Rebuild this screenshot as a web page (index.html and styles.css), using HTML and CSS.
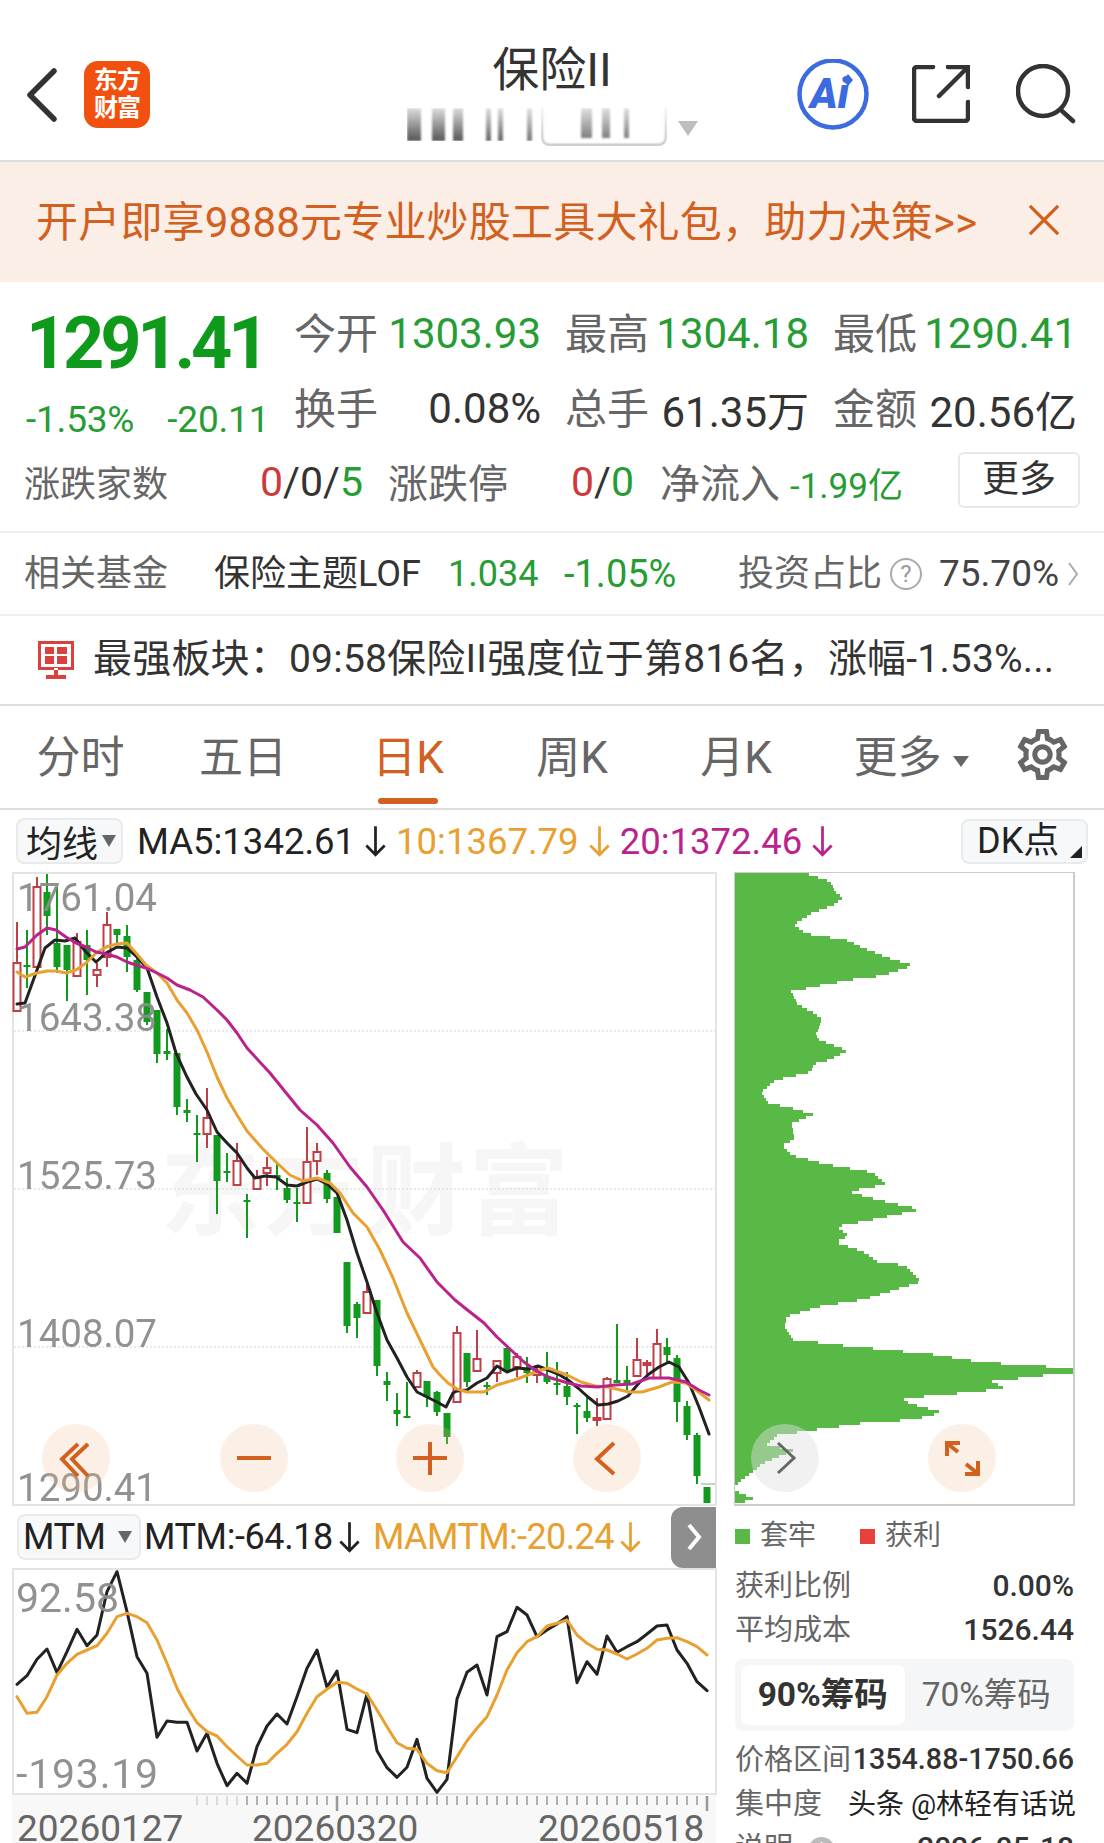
FILE: index.html
```html
<!DOCTYPE html>
<html lang="zh-CN">
<head>
    <meta charset="UTF-8">
    <meta name="viewport" content="width=device-width, initial-scale=1.0">
    <title>保险II</title>
    <link rel="stylesheet" href="styles.css">
</head>
<body>
<div class="page">
    <header class="header">
        <div class="header-left">
            <svg class="back" viewBox="0 0 32 54"><path d="M28 3 L4 27 L28 51"/></svg>
            <div class="logo"><span>东方</span><span>财富</span></div>
        </div>
        <div class="header-title">
            <div class="title">保险II</div>
            <div class="subtitle">
                <div class="blur-a"></div>
                <div class="blur-b"></div>
                <div class="tri-down"></div>
            </div>
        </div>
        <div class="header-right">
            <svg class="icon-ai" viewBox="797 59 72 72">
                <circle cx="833" cy="94" r="33.5"/>
                <text x="810" y="108" class="ai-text">Ai</text>
                <path d="M848 74 l5 6 l-5 6 l-5 -6 z"/>
            </svg>
            <svg class="icon-share" viewBox="912 65 58 58">
                <path d="M933 67 H917 a3 3 0 0 0 -3 3 V118 a3 3 0 0 0 3 3 H965 a3 3 0 0 0 3 -3 V102"/>
                <path d="M948 67 H968 V87"/>
                <path d="M968 67 L939 96"/>
            </svg>
            <svg class="icon-search" viewBox="1016 64 60 60">
                <circle cx="1043" cy="91" r="25"/>
                <path d="M1062 111 L1073 121"/>
            </svg>
        </div>
    </header>

    <div class="banner">
        <div class="banner-text">开户即享9888元专业炒股工具大礼包，助力决策&gt;&gt;</div>
        <svg class="banner-close" viewBox="0 0 34 34"><path d="M2 2 L32 32 M32 2 L2 32"/></svg>
    </div>

    <section class="quote">
        <div class="quote-top">
            <div class="price-box">
                <div class="price">1291.41</div>
                <div class="change"><span>-1.53%</span><span>-20.11</span></div>
            </div>
            <div class="stats">
                <div class="stat"><span class="label">今开</span><span class="green">1303.93</span></div>
                <div class="stat"><span class="label">最高</span><span class="green">1304.18</span></div>
                <div class="stat"><span class="label">最低</span><span class="green">1290.41</span></div>
                <div class="stat"><span class="label">换手</span><span class="dark">0.08%</span></div>
                <div class="stat"><span class="label">总手</span><span class="dark">61.35万</span></div>
                <div class="stat"><span class="label">金额</span><span class="dark">20.56亿</span></div>
            </div>
        </div>
        <div class="breadth">
            <span class="label">涨跌家数</span>
            <span class="dark"><span class="red">0</span>/0/<span class="green">5</span></span>
            <span class="label">涨跌停</span>
            <span class="dark"><span class="red">0</span>/<span class="green">0</span></span>
            <span class="label">净流入</span>
            <span class="green flow">-1.99亿</span>
            <button class="more-btn">更多</button>
        </div>
    </section>

    <div class="fund">
        <span class="label">相关基金</span>
        <span class="dark">保险主题LOF</span>
        <span class="green">1.034</span>
        <span class="green pct">-1.05%</span>
        <span class="label">投资占比</span>
        <span class="help">?</span>
        <span class="dark-soft share">75.70%</span>
        <svg class="fund-arrow" viewBox="0 0 12 26"><path d="M2 2 L10 13 L2 24"/></svg>
    </div>

    <div class="strong">
        <svg class="strong-icon" viewBox="0 0 38 38">
            <path class="solid" d="M1 0 H37 V29 H1 Z M4 3 V26 H34 V3 Z M17 27 H21 V34 H17 Z M9 34 H29 V38 H9 Z"/>
            <path class="solid" d="M8 6 H17 V13 H8 Z M20 6 H30 V13 H20 Z M8 15 H17 V23 H8 Z M20 15 H30 V23 H20 Z"/>
        </svg>
        <div class="strong-text">最强板块：09:58保险II强度位于第816名，涨幅-1.53%...</div>
    </div>

    <nav class="tabs">
        <div class="tab">分时</div>
        <div class="tab">五日</div>
        <div class="tab active">日K</div>
        <div class="tab">周K</div>
        <div class="tab">月K</div>
        <div class="tab">更多<i class="tab-caret"></i></div>
        <svg class="gear" viewBox="2 2 20 20"><path d="M19.43 12.98c.04-.32.07-.64.07-.98 0-.34-.03-.66-.07-.98l2.11-1.65c.19-.15.24-.42.12-.64l-2-3.46c-.09-.16-.26-.25-.44-.25-.06 0-.12.01-.17.03l-2.49 1c-.52-.4-1.08-.73-1.69-.98l-.38-2.65C14.46 2.18 14.25 2 14 2h-4c-.25 0-.46.18-.49.42l-.38 2.65c-.61.25-1.17.59-1.69.98l-2.49-1c-.06-.02-.12-.03-.18-.03-.17 0-.34.09-.43.25l-2 3.46c-.13.22-.07.49.12.64l2.11 1.65c-.04.32-.07.65-.07.98 0 .33.03.66.07.98l-2.11 1.65c-.19.15-.24.42-.12.64l2 3.46c.09.16.26.25.44.25.06 0 .12-.01.17-.03l2.49-1c.52.4 1.08.73 1.69.98l.38 2.65c.03.24.24.42.49.42h4c.25 0 .46-.18.49-.42l.38-2.65c.61-.25 1.17-.59 1.69-.98l2.49 1c.06.02.12.03.18.03.17 0 .34-.09.43-.25l2-3.46c.12-.22.07-.49-.12-.64l-2.11-1.65zM17.45 11.27c.04.31.05.52.05.73 0 .21-.02.43-.05.73l-.14 1.13.89.7 1.08.84-.7 1.21-1.27-.51-1.04-.42-.9.68c-.43.32-.84.56-1.25.73l-1.06.43-.16 1.13-.2 1.35h-1.4l-.19-1.35-.16-1.13-1.06-.43c-.43-.18-.83-.41-1.23-.71l-.91-.7-1.06.43-1.27.51-.7-1.21 1.08-.84.89-.7-.14-1.13c-.03-.31-.05-.54-.05-.74s.02-.43.05-.73l.14-1.13-.89-.7-1.08-.84.7-1.21 1.27.51 1.04.42.9-.68c.43-.32.84-.56 1.25-.73l1.06-.43.16-1.13.2-1.35h1.39l.19 1.35.16 1.13 1.06.43c.43.18.83.41 1.23.71l.91.7 1.06-.43 1.27-.51.7 1.21-1.07.85-.89.7.14 1.13zM12 8c-2.21 0-4 1.79-4 4s1.79 4 4 4 4-1.79 4-4-1.79-4-4-4zm0 6c-1.1 0-2-.9-2-2s.9-2 2-2 2 .9 2 2-.9 2-2 2z"/></svg>
    </nav>

    <div class="ma-row">
        <div class="picker ma-picker">均线<i class="caret"></i></div>
        <div class="ma-values">
            <span class="c-black">MA5:1342.61</span>
            <svg class="down" viewBox="0 0 20 28"><path class="c-black" d="M10 1 V26 M2 18 L10 26 L18 18"/></svg>
            <span class="c-orange">10:1367.79</span>
            <svg class="down" viewBox="0 0 20 28"><path class="c-orange" d="M10 1 V26 M2 18 L10 26 L18 18"/></svg>
            <span class="c-pink">20:1372.46</span>
            <svg class="down" viewBox="0 0 20 28"><path class="c-pink" d="M10 1 V26 M2 18 L10 26 L18 18"/></svg>
        </div>
        <div class="dk">DK点<i class="dk-corner"></i></div>
    </div>

    <div class="charts">
        <div class="charts-left">
            <svg class="main-chart" viewBox="14 874 701 630">
                <text x="160" y="1227" class="watermark">东方财富</text>
                <path class="gridline" d="M14 1031 H715 M14 1189 H715 M14 1347 H715"/>
                <g id="mainCandles"></g>
                <g id="mainLines"></g>
                <path class="last-tick" d="M701 1484 H715"/>
                <text x="17" y="911" class="axis-num">1761.04</text>
                <text x="17" y="1031" class="axis-num">1643.38</text>
                <text x="17" y="1189" class="axis-num">1525.73</text>
                <text x="17" y="1347" class="axis-num">1408.07</text>
                <text x="17" y="1501" class="axis-num">1290.41</text>
                <circle class="round-btn" cx="76" cy="1458" r="34"/>
                <path class="round-icon" d="M78 1444 L62 1459 L78 1476 M88 1444 L72 1459 L88 1476"/>
                <circle class="round-btn" cx="254" cy="1458" r="34"/>
                <path class="round-icon" d="M237 1458 H271"/>
                <circle class="round-btn" cx="430" cy="1458" r="34"/>
                <path class="round-icon" d="M413 1458 H447 M430 1442 V1475"/>
                <circle class="round-btn" cx="607" cy="1458" r="34"/>
                <path class="round-icon" d="M614 1443 L597 1459 L614 1474"/>
            </svg>

            <div class="mtm-row">
                <div class="picker mtm-picker">MTM<i class="caret"></i></div>
                <span class="c-black">MTM:-64.18</span>
                <svg class="down" viewBox="0 0 20 28"><path class="c-black" d="M10 1 V26 M2 18 L10 26 L18 18"/></svg>
                <span class="c-orange mamtm">MAMTM:-20.24</span>
                <svg class="down" viewBox="0 0 20 28"><path class="c-orange" d="M10 1 V26 M2 18 L10 26 L18 18"/></svg>
                <div class="mtm-next"><svg viewBox="0 0 16 30"><path d="M3 3 L13 15 L3 27"/></svg></div>
            </div>

            <svg class="sub-chart" viewBox="14 1570 701 223">
                <g id="subLines"></g>
                <text x="16" y="1612" class="axis-num sub-num">92.58</text>
                <text x="16" y="1788" class="axis-num sub-num low-num">-193.19</text>
            </svg>

            <div class="time-axis">
                <svg class="ticks" viewBox="14 1795 701 18" id="ticks"></svg>
                <div class="dates"><span>20260127</span><span>20260320</span><span>20260518</span></div>
            </div>
        </div>

        <div class="charts-right">
            <svg class="chip-chart" viewBox="735 873 338 631">
                <path id="chipShape" class="chip-fill" d=""/>
                <circle class="round-gray" cx="785" cy="1458" r="34"/>
                <path class="gray-icon" d="M778 1443 L794 1458 L778 1473"/>
                <circle class="round-btn" cx="962" cy="1458" r="34"/>
                <path class="round-icon" d="M947 1456 V1443 H960 M948 1444 L958 1452 M978 1474 V1461 M965 1474 H978 V1472 M977 1473 L966 1464"/>
            </svg>
            <div class="legend">
                <i class="sq sq-green"></i><span>套牢</span>
                <i class="sq sq-red"></i><span>获利</span>
            </div>
            <div class="kv"><span>获利比例</span><b>0.00%</b></div>
            <div class="kv"><span>平均成本</span><b>1526.44</b></div>
            <div class="segment">
                <div class="seg on">90%筹码</div>
                <div class="seg">70%筹码</div>
            </div>
            <div class="kv kv-range"><span>价格区间</span><b>1354.88-1750.66</b></div>
            <div class="kv"><span>集中度</span></div>
            <div class="kv"><span>说明<i class="info">i</i></span><b>2026-05-18</b></div>
        </div>
        <div class="credit">头条 @林轻有话说</div>
    </div>
</div>
<script src="chart.js"></script>
</body>
</html>
```

FILE: styles.css
```css
* {
    box-sizing: border-box;
}
body {
    margin: 0;
    background-color: #fff;
    font-family: Roboto, "Noto Sans CJK SC", sans-serif;
    color: #333;
}
.page {
    width: 1104px;
    height: 1843px;
    overflow: hidden;
    position: relative;
}
.green { color: #279c35; }
.red { color: #cc3a3c; }
.dark { color: #333; }
.dark-soft { color: #444; }
.label { color: #666; margin-bottom: 6px; }

/* header */
.header {
    height: 162px;
    border-bottom: 2px solid #ddd;
    display: grid;
    grid-template-columns: 1fr auto 1fr;
}
.header-left {
    display: flex;
    align-items: flex-start;
    padding: 61px 0 0 26px;
}
.back {
    width: 32px;
    height: 54px;
    margin-top: 7px;
    fill: none;
    stroke: #333;
    stroke-width: 5.5;
    stroke-linecap: round;
    stroke-linejoin: round;
}
.logo {
    width: 66px;
    height: 67px;
    margin-left: 26px;
    background-color: #f2500f;
    border-radius: 14px;
    color: #fff;
    font-size: 24px;
    font-weight: 700;
    line-height: 28px;
    text-align: center;
    padding-top: 5px;
    letter-spacing: -1px;
}
.logo span {
    display: block;
}
.header-title {
    padding-top: 42px;
    display: flex;
    flex-direction: column;
    align-items: center;
}
.title {
    font-size: 47px;
    line-height: 56px;
    color: #333;
}
.subtitle {
    display: flex;
    align-items: flex-start;
    margin-top: 10px;
    height: 38px;
}
.blur-a,
.blur-b {
    height: 33px;
    filter: blur(1px);
    -webkit-mask-image: linear-gradient(to bottom, rgba(0,0,0,.2), #000);
    mask-image: linear-gradient(to bottom, rgba(0,0,0,.2), #000);
}
.blur-a {
    width: 134px;
    background: linear-gradient(to right, #555 0 14px, transparent 14px 25px, #555 25px 38px, transparent 38px 46px, #555 46px 56px, transparent 56px 79px, #666 79px 84px, transparent 84px 91px, #666 91px 96px, transparent 96px 120px, #777 120px 125px, transparent 125px);
}
.blur-b {
    width: 126px;
    height: 38px;
    border: 2px solid #aaa;
    border-top: 0;
    border-radius: 0 0 8px 8px;
    background: linear-gradient(to right, transparent 0 38px, #666 38px 49px, transparent 49px 59px, #666 59px 67px, transparent 67px 81px, #666 81px 86px, transparent 86px);
    background-size: 100% 30px;
    background-repeat: no-repeat;
}
.tri-down {
    width: 0;
    height: 0;
    margin: 13px 0 0 11px;
    border-left: 10px solid transparent;
    border-right: 10px solid transparent;
    border-top: 15px solid #bdbdbd;
}
.header-right {
    display: flex;
    justify-content: flex-end;
    align-items: flex-start;
    padding-right: 28px;
}
.icon-ai {
    width: 72px;
    height: 72px;
    margin-top: 59px;
    fill: #3c6be0;
}
.icon-ai circle {
    fill: none;
    stroke: #3c6be0;
    stroke-width: 4.5;
}
.ai-text {
    font-size: 42px;
    font-weight: 900;
    font-style: italic;
}
.icon-share {
    width: 58px;
    height: 58px;
    margin: 65px 0 0 43px;
    fill: none;
    stroke: #333;
    stroke-width: 4.5;
    stroke-linecap: round;
}
.icon-search {
    width: 60px;
    height: 60px;
    margin: 64px 0 0 46px;
    fill: none;
    stroke: #333;
    stroke-width: 4.5;
    stroke-linecap: round;
}

/* banner */
.banner {
    height: 120px;
    background-color: #fbeee6;
    display: flex;
    align-items: center;
    padding: 0 44px 4px 36px;
    justify-content: space-between;
}
.banner-text {
    font-size: 42px;
    letter-spacing: .2px;
    color: #d2601e;
    white-space: nowrap;
    margin-bottom: 4px;
}
.banner-close {
    width: 32px;
    height: 32px;
    fill: none;
    stroke: #d2601e;
    stroke-width: 3.5;
}

/* quote */
.quote {
    height: 251px;
    border-bottom: 2px solid #eee;
    padding-top: 14px;
}
.quote-top {
    display: flex;
    height: 149px;
    padding-left: 26px;
}
.price-box {
    width: 268px;
}
.price {
    font-size: 72px;
    font-weight: 700;
    line-height: 74px;
    margin-top: 11px;
    letter-spacing: -4.2px;
    color: #0f9a1c;
}
.change {
    display: flex;
    gap: 33px;
    margin-top: 19px;
    font-size: 37px;
    line-height: 40px;
    letter-spacing: -.2px;
    color: #279c35;
    white-space: nowrap;
}
.stats {
    width: 784px;
    display: grid;
    grid-template-columns: 247px 244px 244px;
    column-gap: 24px;
    grid-auto-rows: 75px;
    font-size: 42px;
}
.stat {
    display: flex;
    justify-content: space-between;
    align-items: center;
    white-space: nowrap;
}
.breadth {
    display: grid;
    grid-template-columns: 236px 128px 183px 89px 130px 168px 122px;
    align-items: center;
    padding-left: 24px;
    height: 74px;
    font-size: 40px;
    white-space: nowrap;
}
.breadth .label {
    margin-bottom: 2px;
}
.breadth .label:first-child {
    font-size: 36px;
}
.breadth .dark {
    font-size: 41px;
}
.breadth .flow {
    font-size: 35px;
}
.more-btn {
    width: 122px;
    height: 56px;
    margin-bottom: 4px;
    background-color: #fff;
    border: 2px solid #e8e8e8;
    border-radius: 6px;
    font-family: inherit;
    font-size: 37px;
    color: #333;
    padding: 0;
    line-height: 48px;
}

/* fund and strongest rows */
.fund {
    height: 83px;
    border-bottom: 2px solid #eee;
    display: grid;
    grid-template-columns: 190px 234px 116px 174px 152px 49px 128px 14px;
    align-items: center;
    padding-left: 24px;
    font-size: 36px;
    white-space: nowrap;
}
.fund .label,
.fund > .dark {
    margin-bottom: 8px;
}
.fund .pct {
    font-size: 38px;
}
.fund .share {
    font-size: 37px;
}
.help {
    width: 32px;
    height: 32px;
    border: 2px solid #aaa;
    border-radius: 50%;
    color: #999;
    font-size: 24px;
    line-height: 28px;
    text-align: center;
}
.fund-arrow {
    width: 12px;
    height: 26px;
    fill: none;
    stroke: #aaa;
    stroke-width: 2;
}
.strong {
    height: 90px;
    border-bottom: 2px solid #ddd;
    display: flex;
    align-items: center;
    padding-left: 37px;
}
.strong-icon {
    width: 38px;
    height: 38px;
    fill: #d9413f;
    fill-rule: evenodd;
}
.strong-text {
    margin: 0 0 10px 18px;
    font-size: 39px;
    letter-spacing: .2px;
    color: #333;
    white-space: nowrap;
}

/* tabs */
.tabs {
    height: 104px;
    border-bottom: 2px solid #ddd;
    display: grid;
    grid-template-columns: 161px 164px 166px 162px 166px 184px auto;
    align-items: center;
    padding-bottom: 6px;
    font-size: 44px;
    color: #666;
}
.tab {
    position: relative;
    text-align: center;
    white-space: nowrap;
}
.tab.active {
    color: #d2601e;
}
.tab.active::after {
    content: "";
    position: absolute;
    left: 53px;
    bottom: -18px;
    width: 60px;
    height: 6px;
    border-radius: 3px;
    background-color: #d2601e;
}
.tab-caret {
    display: inline-block;
    margin-left: 11px;
    vertical-align: middle;
    border-left: 8px solid transparent;
    border-right: 8px solid transparent;
    border-top: 11px solid #666;
}
.gear {
    width: 51px;
    height: 51px;
    margin-left: 14px;
    fill: #666;
}

/* indicator rows */
.ma-row {
    height: 62px;
    display: flex;
    align-items: center;
    padding: 0 16px;
    font-size: 36.5px;
    white-space: nowrap;
}
.picker {
    display: flex;
    align-items: center;
    height: 46px;
    background-color: #f7f8fa;
    border: 2px solid #e9eaec;
    border-radius: 8px;
    color: #222;
    font-size: 36px;
}
.ma-picker {
    width: 107px;
    padding-left: 8px;
}
.caret {
    display: inline-block;
    margin-left: 4px;
    border-left: 7px solid transparent;
    border-right: 7px solid transparent;
    border-top: 12px solid #666;
}
.ma-values {
    display: flex;
    align-items: center;
    gap: 9px;
    margin-left: 14px;
}
.c-black { color: #222; stroke: #222; }
.c-orange { color: #e8a030; stroke: #e8a030; }
.c-pink { color: #b9238b; stroke: #b9238b; }
.down {
    width: 23px;
    height: 32px;
    fill: none;
    stroke-width: 2.4;
}
.dk {
    position: relative;
    width: 127px;
    height: 45px;
    margin-left: auto;
    background-color: #f7f8fa;
    border: 2px solid #e9eaec;
    border-radius: 8px;
    padding-left: 14px;
    font-size: 36px;
    line-height: 40px;
    color: #222;
}
.dk-corner {
    position: absolute;
    right: 4px;
    bottom: 4px;
    width: 0;
    height: 0;
    border-left: 12px solid transparent;
    border-bottom: 12px solid #222;
}

/* charts */
.charts {
    position: relative;
    display: flex;
    padding-left: 13px;
}
.charts-left {
    width: 703px;
    flex-shrink: 0;
}
.main-chart {
    display: block;
    width: 701px;
    height: 630px;
    border: 2px solid #e4e4e4;
    box-sizing: content-box;
    margin-left: -1px;
    overflow: visible;
}
.watermark {
    font-size: 100px;
    font-weight: 700;
    letter-spacing: 3px;
    fill: #f6f6f6;
}
.gridline {
    fill: none;
    stroke: #e2e2e2;
    stroke-width: 1.5;
    stroke-dasharray: 2 2;
}
.last-tick {
    stroke: #ccc;
    stroke-width: 2;
}
.axis-num {
    font-size: 38.5px;
    fill: #8c8c8c;
    opacity: .95;
}
.sub-num {
    font-size: 41px;
}
.low-num {
    letter-spacing: .8px;
}
.round-btn {
    fill: rgba(243, 190, 150, .24);
}
.round-gray {
    fill: rgba(225, 225, 225, .45);
}
.round-icon {
    fill: none;
    stroke: #d2601e;
    stroke-width: 4;
}
.gray-icon {
    fill: none;
    stroke: #666;
    stroke-width: 3;
}
.mtm-row {
    display: flex;
    align-items: center;
    height: 62px;
    font-size: 36px;
    letter-spacing: -.4px;
    white-space: nowrap;
}
.mtm-picker {
    width: 124px;
    margin: 0 3px 0 4px;
    padding-left: 4px;
}
.mtm-picker .caret {
    margin-left: 12px;
}
.mtm-row .down {
    margin-left: 5px;
}
.mamtm {
    margin-left: 12px;
    letter-spacing: -.6px;
}
.mtm-next {
    margin-left: auto;
    width: 45px;
    height: 61px;
    background-color: #8e8e8e;
    border-radius: 12px 0 0 12px;
    display: flex;
    align-items: center;
    justify-content: center;
}
.mtm-next svg {
    width: 16px;
    height: 30px;
    fill: none;
    stroke: #fff;
    stroke-width: 4;
}
.sub-chart {
    display: block;
    width: 701px;
    height: 223px;
    border: 2px solid #e4e4e4;
    box-sizing: content-box;
    margin-left: -1px;
    overflow: visible;
}
.time-axis {
    height: 60px;
    background-color: #f8f8f8;
    margin-left: -1px;
}
.ticks {
    display: block;
    width: 701px;
    height: 18px;
    margin-left: 2px;
    stroke: #999;
}
.dates {
    display: grid;
    grid-template-columns: 235px 286px auto;
    padding-left: 5px;
    margin-top: -5px;
    font-size: 37px;
    line-height: 42px;
    color: #666;
}
.charts-right {
    width: 339px;
    margin-left: 19px;
    font-size: 29px;
    color: #666;
}
.chip-chart {
    display: block;
    width: 338px;
    height: 631px;
    border: solid #ccc;
    border-width: 1px 2px 2px 1px;
    box-sizing: content-box;
    margin-left: -1px;
    background-color: #fff;
}
.chip-fill {
    fill: #58b947;
}
.legend {
    display: flex;
    align-items: center;
    height: 55px;
    padding-top: 5px;
    font-size: 28px;
}
.legend span {
    margin-bottom: 6px;
}
.sq {
    width: 15px;
    height: 15px;
    margin-right: 10px;
}
.sq-green { background-color: #58b947; }
.sq-red { background-color: #e8413c; margin-left: 44px; }
.kv {
    display: flex;
    justify-content: space-between;
    align-items: center;
    height: 44px;
    white-space: nowrap;
}
.kv b {
    font-size: 30px;
    font-weight: 500;
    color: #333;
    margin-top: 4px;
}
.segment {
    display: flex;
    height: 72px;
    margin: 10px 0 4px;
    padding: 6px;
    background-color: #f5f6f8;
    border-radius: 8px;
    font-size: 33.5px;
    line-height: 60px;
    text-align: center;
}
.seg {
    flex: 1;
}
.seg.on {
    background-color: #fff;
    border-radius: 8px;
    color: #333;
    font-weight: 700;
}
.kv-range b {
    font-size: 28.7px;
    letter-spacing: 0;
}
.info {
    display: inline-block;
    width: 27px;
    height: 27px;
    margin-left: 15px;
    border-radius: 50%;
    background-color: #bbb;
    color: #fff;
    font-size: 20px;
    line-height: 27px;
    text-align: center;
    vertical-align: middle;
    font-style: normal;
}
.credit {
    position: absolute;
    left: 848px;
    top: 915px;
    font-size: 28px;
    line-height: 36px;
    color: #222;
    white-space: nowrap;
    text-shadow: 1px 0 #fff, -1px 0 #fff, 0 1px #fff, 0 -1px #fff;
}
```

FILE: chart.js
```js
// candle rows: colour, wick top, body top, body bottom, wick bottom (y in page px)
const candles = [
    ['r',922,963,1011,1011],['g',930,965,967,988],['r',877,887,967,967],['g',874,892,916,935],
    ['g',887,943,967,973],['g',945,945,970,1001],['r',933,942,976,976],['g',930,945,960,995],
    ['r',963,970,975,987],['r',912,925,957,967],['g',929,929,935,945],['g',925,936,957,972],
    ['g',955,960,990,992],['g',992,992,1022,1025],['g',1010,1010,1054,1063],['g',1029,1051,1054,1060],
    ['g',1053,1053,1107,1115],['g',1099,1110,1113,1122],['g',1115,1133,1135,1162],['r',1088,1118,1134,1148],
    ['g',1135,1135,1181,1214],['g',1153,1171,1173,1182],['r',1143,1161,1185,1185],['g',1194,1200,1202,1238],
    ['r',1170,1178,1189,1189],['r',1157,1168,1173,1186],['g',1163,1175,1178,1190],['g',1178,1188,1200,1203],
    ['g',1188,1202,1204,1222],['r',1127,1162,1203,1203],['r',1143,1152,1161,1175],['g',1170,1173,1199,1203],
    ['g',1197,1197,1233,1233],['g',1262,1262,1326,1333],['g',1302,1304,1318,1338],['r',1282,1292,1313,1313],
    ['g',1300,1300,1366,1376],['g',1372,1381,1385,1401],['g',1393,1410,1414,1426],['g',1382,1416,1417,1417],
    ['r',1370,1373,1387,1387],['g',1381,1381,1397,1407],['g',1391,1392,1412,1416],['g',1413,1413,1437,1444],
    ['r',1326,1333,1402,1402],['g',1353,1353,1382,1387],['r',1330,1359,1371,1371],['g',1382,1385,1387,1395],
    ['r',1361,1361,1373,1382],['g',1345,1348,1372,1372],['r',1353,1357,1367,1377],['g',1357,1370,1373,1383],
    ['r',1367,1370,1375,1383],['g',1352,1376,1382,1384],['g',1362,1383,1385,1395],['g',1372,1386,1397,1405],
    ['g',1403,1405,1407,1434],['g',1395,1411,1418,1422],['r',1398,1418,1420,1426],['r',1377,1379,1419,1419],
    ['g',1324,1380,1383,1383],['g',1366,1380,1383,1393],['r',1338,1360,1376,1376],['r',1360,1363,1365,1376],
    ['r',1329,1344,1378,1378],['g',1338,1347,1355,1362],['g',1355,1358,1402,1422],['g',1401,1406,1435,1440],
    ['g',1433,1435,1476,1484],['g',1487,1487,1503,1503]
];

const ma5 = '17,1004 25,1003 37,970 45,948 55,940 65,941 75,938 86,952 96,962 106,953 117,947 127,948 138,958 147,968 157,997 167,1023 176,1053 187,1077 196,1094 207,1110 217,1132 227,1143 237,1153 247,1168 255,1178 265,1176 276,1177 287,1185 297,1186 307,1182 317,1179 327,1184 337,1193 347,1220 357,1253 367,1282 377,1313 387,1340 397,1358 407,1377 417,1392 427,1397 437,1402 446,1407 453,1393 457,1391 467,1390 477,1383 487,1378 497,1366 507,1372 517,1368 528,1369 538,1366 548,1370 558,1374 568,1380 578,1388 588,1397 598,1405 608,1404 618,1401 628,1396 639,1383 649,1374 659,1367 669,1362 679,1367 689,1383 699,1407 709,1434';
const ma10 = '17,972 25,977 37,973 47,971 56,971 66,973 76,970 86,963 96,953 106,947 117,944 127,943 136,953 146,965 157,973 167,983 177,1000 187,1013 197,1030 207,1052 217,1077 227,1098 237,1115 247,1131 262,1148 277,1163 290,1175 303,1181 317,1178 330,1183 340,1193 353,1213 367,1227 380,1250 393,1278 407,1313 420,1340 433,1367 440,1375 448,1383 457,1389 467,1392 484,1392 497,1385 514,1380 528,1375 541,1370 548,1368 567,1375 581,1382 595,1386 608,1387 629,1392 642,1392 659,1387 672,1382 686,1383 696,1390 709,1400';
const ma20 = '17,949 25,947 37,935 47,928 56,930 66,937 76,943 86,947 96,952 106,954 117,957 127,962 136,965 146,968 157,973 167,978 177,985 190,990 203,997 217,1010 227,1020 237,1033 247,1048 258,1060 270,1073 300,1110 317,1125 333,1143 350,1167 367,1187 383,1210 403,1242 420,1258 437,1282 455,1300 470,1312 484,1323 497,1337 511,1350 524,1362 538,1372 551,1378 568,1383 581,1386 598,1387 615,1385 632,1384 649,1378 669,1378 686,1382 699,1390 709,1395';

// momentum lines, one value a day, y as offset from 1500 at 3 units per px
const mtm = [553,527,478,447,518,455,388,437,405,275,215,335,470,520,712,663,667,667,753,700,790,857,820,850,740,678,642,672,590,505,450,562,513,688,698,582,752,803,832,802,718,835,877,838,597,517,495,585,410,395,322,345,410,390,372,350,548,485,523,408,457,440,425,402,378,375,450,490,545,572];
const mamtm = [590,640,637,590,525,490,463,450,437,400,350,340,350,368,420,490,565,620,668,695,708,740,768,795,795,790,760,733,695,640,590,568,547,550,567,582,630,680,728,745,748,790,812,818,770,722,685,650,585,510,458,425,410,378,370,360,405,430,448,450,462,477,462,445,420,415,413,425,440,465];

// right edge of the chip profile, x and y in page px
const chipEdge = [[809,873],[830,880],[835,890],[843,896],[833,904],[813,911],[794,923],[805,932],[830,936],[843,937],[867,948],[890,957],[913,964],[883,974],[853,978],[820,984],[791,990],[798,1003],[813,1011],[822,1018],[816,1033],[820,1039],[848,1049],[830,1058],[813,1063],[812,1070],[775,1079],[761,1091],[768,1101],[797,1108],[813,1113],[792,1122],[794,1138],[782,1144],[792,1154],[827,1163],[873,1171],[886,1183],[848,1190],[880,1199],[921,1208],[873,1218],[837,1225],[848,1234],[836,1241],[863,1250],[877,1260],[905,1264],[921,1280],[893,1289],[863,1298],[820,1305],[787,1315],[784,1325],[793,1338],[843,1344],[893,1349],[933,1353],[983,1361],[1037,1364],[1074,1368],[1074,1371],[1043,1374],[992,1380],[1005,1387],[957,1392],[902,1397],[910,1402],[943,1411],[913,1418],[860,1422],[810,1429],[777,1434],[767,1443],[793,1449],[763,1462],[735,1484],[735,1489],[755,1498],[735,1502]];

function candleMarkup() {
    return candles.map((c, i) => {
        const x = 17 + i * 10;
        const stroke = c[0] === 'r' ? '#bd3f47' : '#129a1e';
        let s = `<path d="M${x} ${c[1]} V${c[4]}" stroke="${stroke}" stroke-width="2" fill="none"/>`;
        if (c[0] === 'r') {
            s += `<rect x="${x - 3.5}" y="${c[2]}" width="7" height="${c[3] - c[2]}" fill="#fff" stroke="${stroke}" stroke-width="2"/>`;
        } else {
            s += `<rect x="${x - 3.5}" y="${c[2]}" width="7" height="${Math.max(c[3] - c[2], 2)}" fill="${stroke}"/>`;
        }
        return s;
    }).join('');
}

function lineMarkup(points, color) {
    return `<polyline points="${points}" fill="none" stroke="${color}" stroke-width="3" stroke-linejoin="round" stroke-linecap="round"/>`;
}

function subPoints(values) {
    return values.map((v, i) => `${17 + i * 10},${(1500 + v / 3).toFixed(1)}`).join(' ');
}

// the profile is drawn as bars 3px high, so its edge steps like the real one
function chipPath() {
    let d = 'M735 873';
    let seg = 0;
    for (let y = 873; y < 1503; y += 3) {
        while (seg < chipEdge.length - 2 && chipEdge[seg + 1][1] < y) seg++;
        const a = chipEdge[seg];
        const b = chipEdge[seg + 1];
        const t = Math.min(Math.max((y - a[1]) / (b[1] - a[1]), 0), 1);
        const x = Math.round(a[0] + (b[0] - a[0]) * t);
        d += ` H${x} V${y + 3}`;
    }
    return d + ' H735 Z';
}

function tickMarkup() {
    let s = '';
    for (let x = 197; x <= 707; x += 10) {
        const major = x === 337 || x === 707;
        const fade = x < 240 ? ' opacity=".4"' : '';
        s += `<path d="M${x} 1796 V${major ? 1811 : 1805}" stroke-width="${major ? 2.5 : 1.5}"${fade}/>`;
    }
    return s;
}

document.getElementById('mainCandles').innerHTML = candleMarkup();
document.getElementById('mainLines').innerHTML =
    lineMarkup(ma5, '#222') + lineMarkup(ma10, '#e8a030') + lineMarkup(ma20, '#b9238b');
document.getElementById('subLines').innerHTML =
    lineMarkup(subPoints(mtm), '#222') + lineMarkup(subPoints(mamtm), '#e8a030');
document.getElementById('chipShape').setAttribute('d', chipPath());
document.getElementById('ticks').innerHTML = tickMarkup();
```
